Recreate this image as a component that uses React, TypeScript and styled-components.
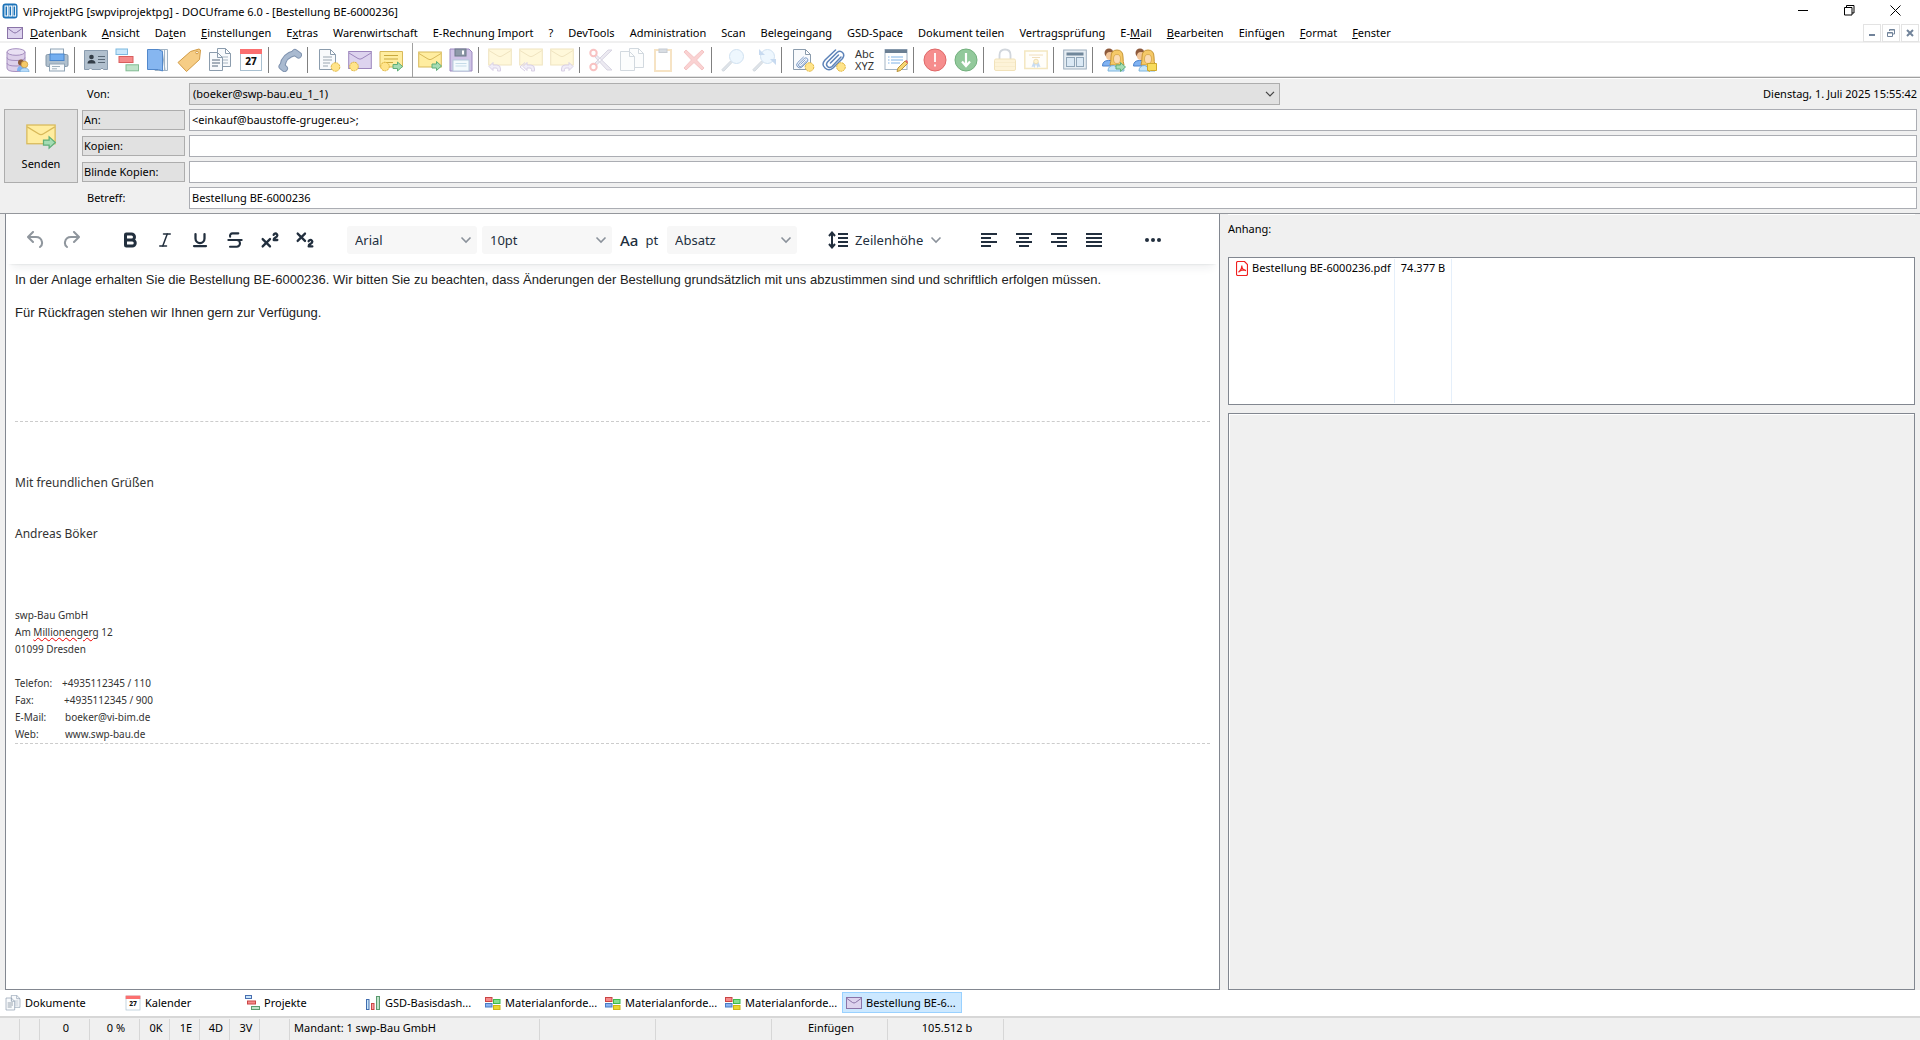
import React from 'react';
import styled, { createGlobalStyle } from 'styled-components';
import { Bold, Italic, Underline, Strikethrough, Superscript, Subscript } from 'lucide-react';

const UI_FONT = '"Noto Sans", "Open Sans", sans-serif';

const GlobalStyle = createGlobalStyle`
  *, *::before, *::after { box-sizing: border-box; }
  body { margin: 0; background: #f0f0f0; }
  button, input, select { font: inherit; color: inherit; margin: 0; }
`;

/* ---------- window frame ---------- */

const Window = styled.div`
  min-height: 100vh;
  display: flex;
  flex-direction: column;
  background: #f0f0f0;
  color: #000;
  font: 11px/16px ${UI_FONT};
`;

const TitleBar = styled.header`
  height: 24px;
  padding: 0 2px 4px;
  display: flex;
  align-items: center;
  background: #fff;
`;

const Title = styled.h1`
  margin: 4px 0 0 5px;
  flex: 1;
  font-size: 11px;
  line-height: 16px;
  font-weight: 400;
  white-space: nowrap;
`;

const AppLogo = styled.span`
  display: flex;
  margin-top: 2px;
`;

const CaptionButton = styled.button`
  width: 46px;
  height: 20px;
  padding: 0;
  border: 0;
  background: none;
  display: grid;
  place-items: center;
`;

const MenuBar = styled.nav`
  height: 19px;
  padding-left: 7px;
  display: flex;
  align-items: center;
  background: #fff;
  border-bottom: 2px solid #f0f0f0;
`;

const MenuItems = styled.div`
  flex: 1;
  display: flex;
  gap: 1px;
`;

const MenuItem = styled.button`
  padding: 0 7px;
  border: 0;
  background: none;
  line-height: 16px;
  white-space: nowrap;
`;

const MdiButtons = styled.div`
  display: flex;
  gap: 1px;
  padding-right: 1px;
`;

const MdiButton = styled.button`
  width: 18px;
  height: 18px;
  padding: 0;
  border: 1px solid #e3e3e3;
  background: #fff;
  display: grid;
  place-items: center;
`;

const ToolBar = styled.div`
  height: 36px;
  padding-left: 2px;
  display: flex;
  align-items: stretch;
  background: #fff;
  border-bottom: 1px solid #fff;
  box-shadow: inset 0 -1px #a0a0a0, inset 0 -2px #e3e3e3;
`;

const ToolButton = styled.button<{ $dim?: boolean }>`
  width: 31px;
  height: 34px;
  padding: 0;
  border: 0;
  background: none;
  display: grid;
  place-items: center;
  opacity: ${p => (p.$dim ? 0.38 : 1)};
`;

const ToolSeparator = styled.span<{ $tall?: boolean }>`
  width: 8px;
  display: flex;
  padding: ${p => (p.$tall ? '0 0 1px 6px' : '4px 0 5px 2px')};
  &::before {
    content: '';
    width: 1px;
    background: ${p => (p.$tall ? '#a0a0a0' : '#808080')};
  }
`;

const SpellLabel = styled.span`
  font-size: 11px;
  line-height: 12px;
  color: #333;
`;

/* ---------- mail header ---------- */

const MailHeader = styled.form`
  display: grid;
  grid-template-columns: 74px 103px minmax(0, 1fr);
  grid-auto-rows: 22px;
  gap: 4px;
  padding: 4px 3px 4px 4px;
  border-bottom: 1px solid #94979c;
`;

const SendButton = styled.button`
  grid-column: 1;
  grid-row: 2 / 5;
  border: 1px solid #adadad;
  background: #e1e1e1;
  display: flex;
  flex-direction: column;
  align-items: center;
  justify-content: center;
  gap: 6px;
`;

const FieldLabel = styled.label`
  grid-column: 2;
  padding-left: 5px;
  line-height: 22px;
`;

const FieldButton = styled.button`
  grid-column: 2;
  height: 20px;
  align-self: center;
  padding: 0 1px;
  border: 1px solid #adadad;
  background: #e1e1e1;
  text-align: left;
`;

const FieldInput = styled.input`
  grid-column: 3;
  min-width: 0;
  padding: 0 2px;
  border: 1px solid #abadb3;
  background: #fff;
`;

const SenderRow = styled.div`
  grid-column: 3;
  display: flex;
  justify-content: space-between;
  align-items: center;
  gap: 16px;
  white-space: nowrap;
`;

const Picker = styled.span<{ $width: number }>`
  width: ${p => p.$width}px;
  display: grid;
  align-items: center;
  > * { grid-area: 1 / 1; }
  > svg { justify-self: end; margin-right: 5px; pointer-events: none; }
`;

const SenderSelect = styled.select`
  appearance: none;
  width: 100%;
  height: 22px;
  padding: 0 3px;
  border: 1px solid #adadad;
  border-radius: 0;
  background: #e1e1e1;
`;

/* ---------- editor ---------- */

const Workspace = styled.main`
  flex: 1;
  display: grid;
  grid-template-columns: minmax(0, 1215fr) minmax(0, 687fr);
  gap: 8px;
  padding-left: 5px;
  padding-right: 5px;
`;

const Editor = styled.section`
  display: flex;
  flex-direction: column;
  background: #fff;
  border: 1px solid #828790;
  border-top: 0;
`;

const EditorBar = styled.div`
  display: flex;
  align-items: center;
  height: 50px;
  margin: 0 2px;
  padding: 2px 10px 0;
  color: #222f3e;
  font-size: 13px;
  box-shadow: 0 2px 2px -2px rgba(34, 47, 62, 0.15), 0 8px 8px -4px rgba(34, 47, 62, 0.07);
`;

const BarGroup = styled.div<{ $left?: number }>`
  display: flex;
  align-items: center;
  margin-left: ${p => p.$left ?? 0}px;
`;

const BarButton = styled.button<{ $muted?: boolean; $wide?: boolean }>`
  width: ${p => (p.$wide ? 'auto' : '35px')};
  height: 28px;
  padding: 0;
  border: 0;
  background: none;
  display: flex;
  align-items: center;
  justify-content: center;
  gap: 7px;
  opacity: ${p => (p.$muted ? 0.5 : 1)};
`;

const CaseMark = styled.span`
  font-size: 15px;
  font-weight: 500;
`;

const BarSelect = styled.select`
  appearance: none;
  width: 100%;
  height: 28px;
  padding: 0 8px;
  border: 0;
  border-radius: 3px;
  background: #f7f7f7;
`;

const Message = styled.div`
  flex: 1;
  padding: 7px 9px;
  color: #222;
  font: 13px/17px "Liberation Sans", Arial, sans-serif;
`;

const Paragraph = styled.p`
  margin: 0 0 16px;
`;

const Signature = styled.div`
  margin-top: 100px;
  padding-top: 52px;
  border: dashed #ccc;
  border-width: 1px 0;
  color: #333;
  font: 11px/17px ${UI_FONT};
`;

const Greeting = styled.p<{ $below: number }>`
  margin: 0 0 ${p => p.$below}px;
  font-size: 12px;
`;

const Address = styled.div`
  font-size: 10px;
`;

const Misspelled = styled.span`
  text-decoration: underline wavy #e00 1px;
`;

const Contact = styled.div`
  display: flex;
`;

const ContactKey = styled.span<{ $width: number }>`
  width: ${p => p.$width}px;
`;

/* ---------- attachments ---------- */

const SidePanel = styled.aside`
  display: flex;
  flex-direction: column;
  border-top: 1px solid #fff;
`;

const SideTitle = styled.h2`
  margin: 6px 0 20px;
  font-size: 11px;
  line-height: 16px;
  font-weight: 400;
`;

const FileBox = styled.div`
  height: 148px;
  padding: 1px;
  border: 1px solid #828790;
  background: #fff;
`;

const FileTable = styled.table`
  height: 100%;
  border-collapse: collapse;
  tr:first-child { height: 18px; }
  td {
    padding: 0 3px 0 6px;
    border-right: 1px solid #e5effa;
    white-space: nowrap;
  }
  td + td { padding-right: 6px; }
`;

const FileName = styled.a`
  display: flex;
  align-items: center;
  gap: 4px;
  color: inherit;
  text-decoration: none;
`;

const Preview = styled.div`
  flex: 1;
  margin-top: 8px;
  border: 1px solid #828790;
  box-shadow: inset 1px 1px #fff;
`;

/* ---------- bottom bars ---------- */

const DocTabs = styled.div`
  display: flex;
  height: 26px;
  padding: 2px 2px 3px;
  background: #fff;
`;

const DocTab = styled.button<{ $active?: boolean }>`
  width: 120px;
  padding: 0 ${p => (p.$active ? 3 : 2)}px;
  display: flex;
  align-items: center;
  gap: 4px;
  border: 1px solid ${p => (p.$active ? '#99d1ff' : 'transparent')};
  background: ${p => (p.$active ? '#cce8ff' : 'none')};
  white-space: nowrap;
`;

const StatusBar = styled.footer`
  display: flex;
  height: 24px;
  padding-top: 1px;
  border-top: 2px solid #d7d7d7;
`;

const StatusCell = styled.span<{ $width: number; $left?: boolean }>`
  width: ${p => p.$width}px;
  padding: ${p => (p.$left ? '0 4px' : '0 0 0 3px')};
  border-right: 1px solid #d7d7d7;
  text-align: ${p => (p.$left ? 'left' : 'center')};
  line-height: 18px;
`;

/* ---------- icons ---------- */

const Svg = ({ size = 24, box = 24, children }: { size?: number; box?: number; children: React.ReactNode }) => (
  <svg width={size} height={size} viewBox={`0 0 ${box} ${box}`} fill="none" aria-hidden="true">{children}</svg>
);

const Seal = ({ x, y }: { x: number; y: number }) => (
  <circle cx={x} cy={y} r="4.3" fill="#ffe48a" stroke="#e0b53c" strokeDasharray="2 .6" />
);
const GreenArrow = ({ x, y }: { x: number; y: number }) => (
  <path transform={`translate(${x} ${y})`} d="M0 2.500h4.500V0L9.500 4.500 4.500 9V6.500H0z" fill="#a5dcb4" stroke="#5fae78" />
);
const Envelope = ({ fill, line, y = 1.5, h = 17 }: { fill: string; line: string; y?: number; h?: number }) => (
  <g stroke={line} fill={fill} transform={`translate(0 ${y})`}>
    <rect x=".7" y=".5" width="22.6" height={h} />
    <path d="M1 2l9 5.500q2 1.300 4 0L23 2" />
  </g>
);
const YELLOW = { fill: '#ffeda0', line: '#d8b95a' };
const PURPLE = { fill: '#ddd3ee', line: '#9d86bd' };
const Page = ({ x = 3, y = 1, w = 16, h = 21 }: { x?: number; y?: number; w?: number; h?: number }) => (
  <path d={`M${x + .5} ${y + .5}h${w - 6}l5 5v${h - 6}h-${w - 1}zM${x + w - 5.5} ${y + .5}v5h5`} fill="#f8fafc" stroke="#8b9cad" />
);
const Curl = ({ x, flip }: { x: number; flip?: boolean }) => (
  <path transform={`translate(${x} 14.500)${flip ? ' scale(-1 1)' : ''}`} d="M0 4L4 0v2.500h4q3.500 0 3.500 4V8.500h-3V7q0-1.500-1.500-1.500H4V8z" fill="#ddd3ee" stroke="#9d86bd" />
);
const People = ({ badge }: { badge: React.ReactNode }) => (
  <Svg>
    <circle cx="7" cy="5" r="4.500" fill="#8d5a3c" />
    <circle cx="8" cy="8" r="4" fill="#f3c79a" />
    <path d="M.500 18q0-5.500 6-5.500h4V18z" fill="#7fb2f2" stroke="#4a82cc" />
    <path d="M8 17q1-3 1-8 0-7 6-7t6 7q0 5 1 8z" fill="#f5c967" stroke="#c79536" />
    <ellipse cx="15" cy="11" rx="3.500" ry="4.500" fill="#fbdcb4" stroke="#c79536" strokeWidth=".6" />
    <path d="M6 23q0-5.500 6-5.500l3 2 3-2q4 0 4 5.500z" fill="#c5e5fb" stroke="#7db4dd" />
    {badge}
  </Svg>
);

const AppIcon = () => (
  <Svg size={16} box={16}>
    <rect x=".5" y=".5" width="15" height="15" rx="3" fill="#1c73b9" />
    <rect x="3" y="3" width="2.600" height="10" fill="#1c73b9" stroke="#fff" />
    <rect x="7" y="3" width="2.600" height="10" fill="#1c73b9" stroke="#fff" />
    <rect x="11" y="3" width="2.600" height="10" fill="#1c73b9" stroke="#fff" />
  </Svg>
);
const MiniMail = () => (
  <svg width="16" height="12" viewBox="0 0 16 12" fill="#ddd3ee" stroke="#8a74a8" aria-hidden="true">
    <rect x=".5" y=".5" width="15" height="11" />
    <path d="M1 1.500l5.500 4q1.500 1 3 0l5.500-4" />
  </svg>
);
const DatabaseIcon = () => (
  <Svg>
    <path d="M1 4v16q0 3.500 9 3.500T19 20V4z" fill="#ddd0ea" stroke="#a58ebf" />
    <ellipse cx="10" cy="4" rx="9" ry="3.300" fill="#e9e0f3" stroke="#a58ebf" />
    <path d="M1 9.500q0 3 9 3t9-3M1 15q0 3 9 3t9-3" stroke="#a58ebf" />
    <circle cx="15" cy="14.500" r="3" fill="#8d5a3c" />
    <path d="M11 23q0-5 4-5h2v5z" fill="#7fb2f2" />
    <circle cx="18.500" cy="16.500" r="3.300" fill="#f5c967" stroke="#c79536" strokeWidth=".7" />
    <path d="M14 24q0-4 4.500-4t4.500 4z" fill="#b7dcfa" stroke="#6aa3d6" strokeWidth=".7" />
  </Svg>
);
const PrinterIcon = () => (
  <Svg>
    <rect x="5.500" y="1" width="13" height="7" fill="#f4f8fb" stroke="#90a4b5" />
    <rect x="1" y="6.500" width="22" height="12" rx="1.500" fill="#afbfcd" stroke="#8497a8" />
    <rect x="5" y="6" width="14" height="6.500" fill="#72aef0" stroke="#4a86cc" />
    <rect x="4.500" y="16" width="15" height="7" fill="#f8fafc" stroke="#90a4b5" />
    <path d="M7 18.500h8M7 20.800h5" stroke="#9fb0bd" />
  </Svg>
);
const CardIcon = () => (
  <Svg>
    <path d="M.500 2.500h23v19h-4l-1.500-1.500-1.500 1.500H8L6.500 20 5 21.500H.500z" fill="#b1c0ce" stroke="#8a9cae" />
    <circle cx="7.500" cy="9" r="2.300" fill="#333d47" />
    <path d="M3.500 15.500q0-3.500 4-3.500t4 3.500z" fill="#333d47" />
    <path d="M14 8.500h7M14 11.500h7M14 14.500h7" stroke="#5a6977" />
  </Svg>
);
const ProjectIcon = () => (
  <Svg>
    <rect x="1" y="1" width="11.500" height="5.500" fill="#c9e7fb" stroke="#7fb9e0" />
    <rect x="4" y="8.500" width="14" height="6" fill="#f58a8a" stroke="#d95e5e" />
    <rect x="11" y="16.800" width="12.500" height="6" fill="#bfe3c9" stroke="#82bd93" />
  </Svg>
);
const BookIcon = () => (
  <Svg>
    <path d="M9 1.500h12.500v21H9z" fill="#f6f9fc" stroke="#9fb2c4" />
    <path d="M16 2l3 20M18.500 2v20" stroke="#9fb2c4" />
    <path d="M1.500 1.500h11l4 2v19.500l-4-1.500h-11z" fill="#86b6f0" stroke="#5288cb" />
  </Svg>
);
const TagIcon = () => (
  <Svg>
    <path d="M13.500 3.500L22 1l1.500 1-1 9.500L9.500 23.500 1 14.500z" fill="#f6cd85" stroke="#d09a45" strokeLinejoin="round" />
    <circle cx="20" cy="4.500" r="1.300" fill="#fff" stroke="#d09a45" />
  </Svg>
);
const DocsIcon = ({ size = 24 }: { size?: number }) => (
  <Svg size={size}>
    <Page x={9} y={0} w={14} h={19} />
    <path d="M13 9h7M13 12h7M13 15h7" stroke="#a9b6c2" />
    <Page x={1} y={4} w={14} h={19} />
    <path d="M4 12h8M4 15h8M4 18h6" stroke="#8b98a5" strokeWidth="1.300" />
  </Svg>
);
const CalendarIcon = ({ size = 24 }: { size?: number }) => (
  <Svg size={size}>
    <rect x="1.500" y="1.500" width="21" height="21" fill="#fff" stroke="#a9c0d0" />
    <rect x="1" y="1" width="22" height="5" fill="#fb6f6f" />
    <text x="12" y="16.500" textAnchor="middle" fontFamily={UI_FONT} fontSize="10" fontWeight="800" fill="#111">27</text>
  </Svg>
);
const PhoneIcon = () => (
  <Svg>
    <g strokeLinecap="round" strokeLinejoin="round" stroke="#8094b0">
      <path d="M4.500 17.500Q6 7.500 17 5" strokeWidth="6" />
      <path d="M4 18.500l2.500 2M17 4.500l3.500 2.500" strokeWidth="7" />
    </g>
    <g strokeLinecap="round" strokeLinejoin="round" stroke="#a9bad0">
      <path d="M4.500 17.500Q6 7.500 17 5" strokeWidth="4" />
      <path d="M4 18.500l2.500 2M17 4.500l3.500 2.500" strokeWidth="5" />
    </g>
  </Svg>
);
const NewDocIcon = () => (
  <Svg><Page x={2} w={17} /><path d="M6 9h9M6 12h9M6 15h7M6 18h5" stroke="#9aa6b1" /><Seal x={18.500} y={19} /></Svg>
);
const NewMailIcon = () => <Svg><Envelope {...PURPLE} y={3} h={17} /><Seal x={6} y={18.500} /></Svg>;
const NewNoteIcon = () => (
  <Svg>
    <path d="M1 3.500h22.500v15.500H1z" fill="#ffeda0" stroke="#d8b95a" />
    <path d="M5 7.500h14M5 11h14M5 14.500h9" stroke="#c9a93f" />
    <Seal x={6} y={18.500} /><GreenArrow x={14} y={14} />
  </Svg>
);
const SendMailIcon = ({ size = 24 }: { size?: number }) => (
  <Svg size={size}><Envelope {...YELLOW} y={3.5} h={15} /><GreenArrow x={14} y={13.5} /></Svg>
);
const SaveIcon = () => (
  <Svg>
    <path d="M1 1h19l3 3v19H1z" fill="#cfc3e6" stroke="#9d8ac0" />
    <rect x="6" y="1" width="11" height="7" fill="#8d99a8" stroke="#6f7b8a" /><rect x="13" y="2.500" width="2" height="4" fill="#fff" />
    <rect x="4" y="12" width="16" height="11" fill="#f4fafd" stroke="#b6cbdc" />
    <path d="M6.500 15.500h11M6.500 18h11" stroke="#c5dbe8" />
  </Svg>
);
const ReplyIcon = () => <Svg><Envelope {...YELLOW} y={.5} h={16} /><Curl x={1} /></Svg>;
const ReplyAllIcon = () => <Svg><Envelope {...YELLOW} y={.5} h={16} /><path d="M6 14.500l-5 4.500 5 4" stroke="#9d86bd" /><Curl x={4} /></Svg>;
const ForwardIcon = () => <Svg><Envelope {...YELLOW} y={.5} h={16} /><Curl x={23} flip /></Svg>;
const CutIcon = () => (
  <Svg>
    <path d="M7 6.500L23 22h-5L6 9zM7 17.500L23 2h-4L6 15z" fill="#cfc9dd" stroke="#9a92b5" />
    <circle cx="4.500" cy="5" r="3.200" stroke="#ee6060" strokeWidth="2" /><circle cx="4.500" cy="19" r="3.200" stroke="#ee6060" strokeWidth="2" />
  </Svg>
);
const CopyIcon = () => <Svg><Page x={9} y={0} w={15} h={20} /><Page x={0} y={3} w={15} h={20} /></Svg>;
const PasteIcon = () => (
  <Svg>
    <rect x="4" y="2" width="16" height="21" fill="#fff" stroke="#eab765" strokeWidth="2" />
    <rect x="8" y="1" width="8" height="3.500" fill="#9aa7b8" stroke="#6d7b8d" />
  </Svg>
);
const DeleteIcon = () => <Svg><path d="M4 2l8 7.500L20 2l2 2-7.500 8 7.500 8-2 2-8-7.500L4 22l-2-2 7.500-8L2 4z" fill="#f28a8a" stroke="#e46868" /></Svg>;
const SearchIcon = ({ again }: { again?: boolean }) => (
  <Svg>
    <path d="M11 14.500L3 23q-2 .500-2-1.500L9.500 13z" fill="#a9b8c6" stroke="#8d9dad" />
    <circle cx="15.500" cy="8.500" r="7" fill="#d4ebfd" stroke="#85b2da" />
    {again && <path d="M7 1v6h6zM24 17v-6h-6z" fill="#6e9fd8" />}
  </Svg>
);
const Clip = ({ t }: { t?: string }) => (
  <path transform={t} d="M19 9l-9 9.500q-2.500 2-4.500 0t0-4.500L15 4.500q3-2.500 5.500 0t0 6L11 20q-4 3.500-8 0t0-8L13.500 2M16.500 7l-8 8" stroke="#5d83b8" strokeWidth="1.500" strokeLinecap="round" />
);
const AttachDocIcon = () => <Svg><Page x={2} w={18} /><Clip t="translate(5 8) scale(.55)" /><Seal x={18.500} y={19} /></Svg>;
const AttachIcon = () => <Svg><Clip /><Seal x={19} y={19} /></Svg>;
const EditFormIcon = () => (
  <Svg>
    <rect x="1" y="1.500" width="22" height="20" fill="#fff" stroke="#a3b4c4" /><rect x="1" y="1.500" width="22" height="3.500" fill="#6b7f93" />
    <path d="M4 9h1.500M4 12h1.500M4 15h1.500M7 9h12M7 12h12M7 15h9" stroke="#7fb2e6" />
    <path d="M14 20l7-7 2.500 2.500-7 7-3.500 1z" fill="#f7d774" stroke="#b9923a" /><path d="M21 13l1.300-1.300 2 2.300-1 1.500z" fill="#e46868" />
  </Svg>
);
const AlertIcon = () => (
  <Svg><circle cx="12" cy="12" r="11" fill="#f68d8d" stroke="#e06868" /><path d="M12 5v9M12 16.500v2" stroke="#fff" strokeWidth="1.800" /></Svg>
);
const DownIcon = () => (
  <Svg><circle cx="12" cy="12" r="11" fill="#92c99b" stroke="#72b07d" /><path d="M12 5v12M8 13.500l4 4.500 4-4.500" stroke="#fff" strokeWidth="2.200" /></Svg>
);
const LockIcon = () => (
  <Svg>
    <path d="M6.500 11V7q0-5.500 5.500-5.500T17.500 7v4" stroke="#8794a5" strokeWidth="1.800" />
    <rect x="1.500" y="11" width="21" height="11.500" rx="1.500" fill="#fbe29a" stroke="#ddb44c" /><path d="M2 14.500h20M2 18.500h20" stroke="#efcf7a" />
  </Svg>
);
const CertIcon = () => (
  <Svg>
    <rect x=".800" y="3" width="22.400" height="17.500" fill="#fffdf3" stroke="#e3c15d" strokeWidth="1.500" /><path d="M5 7h14M8 9.500h8" stroke="#dcae55" />
    <path d="M9.500 14l-2 5 2-.500 1 1.500 1.500-4 1.500 4 1-1.500 2 .500-2-5z" fill="#6fa5dd" /><circle cx="12" cy="13.500" r="2.300" fill="#ffe48a" stroke="#d5a93b" />
  </Svg>
);
const LayoutIcon = () => (
  <Svg>
    <rect x=".700" y="2" width="22.600" height="19" fill="#e6edf3" stroke="#9cadbd" />
    <rect x="3.500" y="4.500" width="17" height="3" fill="#70879b" />
    <rect x="3.500" y="9.500" width="8" height="9" fill="#dbe9f5" stroke="#8fa5b8" /><rect x="13.500" y="9.500" width="7" height="9" fill="#dbe9f5" stroke="#8fa5b8" />
  </Svg>
);
const Chevron = () => <svg width="10" height="6" viewBox="0 0 10 6" fill="none" stroke="#444" strokeWidth="1.200" aria-hidden="true"><path d="M1 .8l4 4 4-4" /></svg>;
const BarChevron = () => <svg width="12" height="8" viewBox="0 0 12 8" fill="none" stroke="#8b929b" strokeWidth="1.600" aria-hidden="true"><path d="M1.500 1.500l4.500 4.500 4.500-4.500" /></svg>;
const UndoIcon = () => <Svg><path d="M9 4L4 9l5 5M4.500 9H12q5 0 6 5 .500 3.500-2 5" stroke="#222f3e" strokeWidth="2" strokeLinecap="round" strokeLinejoin="round" /></Svg>;
const RedoIcon = () => <Svg><path d="M15 4l5 5-5 5M19.500 9H12q-5 0-6 5-.500 3.500 2 5" stroke="#222f3e" strokeWidth="2" strokeLinecap="round" strokeLinejoin="round" /></Svg>;
const LineHeightIcon = () => (
  <svg width="20" height="18" viewBox="0 0 20 18" fill="none" stroke="#222f3e" strokeWidth="2" aria-hidden="true">
    <path d="M4 2v14M1 5l3-3.500L7 5M1 13l3 3.500L7 13M10 3h10M10 7h10M10 11h10M10 15h10" />
  </svg>
);
const AlignIcon = ({ spans }: { spans: [number, number][] }) => (
  <svg width="16" height="16" viewBox="0 0 16 16" stroke="#222f3e" strokeWidth="2" aria-hidden="true">
    {spans.map(([a, b], i) => <path key={i} d={`M${a} ${2 + i * 4}H${b}`} />)}
  </svg>
);
const DotsIcon = () => <svg width="18" height="6" viewBox="0 0 18 6" fill="#222f3e" aria-hidden="true"><circle cx="3" cy="3" r="2" /><circle cx="9" cy="3" r="2" /><circle cx="15" cy="3" r="2" /></svg>;
const PdfIcon = () => (
  <svg width="12" height="15" viewBox="0 0 12 15" fill="none" stroke="#f02020" aria-hidden="true">
    <path d="M2 .5h6.500l3 3V13q0 1.500-1.500 1.500H2Q.5 14.500.5 13V2Q.5.5 2 .5z" fill="#fff" strokeWidth="1.200" />
    <path d="M2.500 11.200Q6 8.500 5.800 4.500M5.800 4.500Q5.500 8.500 10 9.700M3 10.500Q6 8.700 9.500 9" strokeWidth="1.200" />
  </svg>
);
const MiniProject = () => (
  <Svg size={15} box={15}>
    <rect x=".5" y=".5" width="6" height="3" fill="#c9e7fb" stroke="#4a6fb0" /><rect x="2.500" y="6" width="8" height="3" fill="#f58a8a" stroke="#c94545" /><rect x="6.500" y="11.500" width="8" height="3" fill="#bfe3c9" stroke="#5b9a6f" />
  </Svg>
);
const MiniChart = () => (
  <Svg size={16} box={16}>
    <rect x="1.500" y="4.500" width="2.500" height="10" fill="#c9e7fb" stroke="#3f6cae" /><rect x="6.500" y="8.500" width="2.500" height="6" fill="#f9a0a0" stroke="#c94545" /><rect x="11.500" y="1.500" width="3" height="13" fill="#bfe3c9" stroke="#5b9a6f" />
  </Svg>
);
const MiniTiles = () => (
  <Svg size={16} box={16}>
    <rect x=".5" y="2.500" width="6.500" height="4" fill="#f58a8a" stroke="#c94545" /><rect x="8.500" y="4.500" width="6.500" height="4" fill="#86e08e" stroke="#3fba4b" />
    <rect x=".5" y="8.500" width="6.500" height="3.500" fill="#8ab4f0" stroke="#4a7cc4" /><rect x="8.500" y="10.500" width="6.500" height="4" fill="#ecd52f" stroke="#d0b514" />
  </Svg>
);

/* ---------- data ---------- */

// An ampersand marks the access key of a menu entry.
const menus = [
  '&Datenbank', '&Ansicht', 'Da&ten', '&Einstellungen', 'E&xtras', 'Warenwirtschaft', 'E-Rechnung Import', '?',
  'DevTools', 'Administration', 'Scan', 'Belegeingang', 'GSD-Space', 'Dokument teilen', 'Vertragsprüfung',
  'E-&Mail', '&Bearbeiten', 'Einfü&gen', '&Format', '&Fenster',
];

type Tool = { name: string; icon: React.ReactNode; dim?: boolean };
const toolGroups: Tool[][] = [
  [{ name: 'Datenbank', icon: <DatabaseIcon /> }],
  [{ name: 'Drucken', icon: <PrinterIcon /> }],
  [
    { name: 'Adressen', icon: <CardIcon /> }, { name: 'Projekte', icon: <ProjectIcon /> }, { name: 'Katalog', icon: <BookIcon /> },
    { name: 'Artikel', icon: <TagIcon /> }, { name: 'Dokumente', icon: <DocsIcon /> }, { name: 'Kalender', icon: <CalendarIcon /> },
  ],
  [{ name: 'Telefon', icon: <PhoneIcon /> }],
  [{ name: 'Neues Dokument', icon: <NewDocIcon /> }, { name: 'Neue E-Mail', icon: <NewMailIcon /> }, { name: 'Neue Notiz', icon: <NewNoteIcon /> }],
  [{ name: 'Senden', icon: <SendMailIcon /> }, { name: 'Speichern', icon: <SaveIcon /> }],
  [{ name: 'Antworten', icon: <ReplyIcon />, dim: true }, { name: 'Allen antworten', icon: <ReplyAllIcon />, dim: true }, { name: 'Weiterleiten', icon: <ForwardIcon />, dim: true }],
  [
    { name: 'Ausschneiden', icon: <CutIcon />, dim: true }, { name: 'Kopieren', icon: <CopyIcon />, dim: true },
    { name: 'Einfügen', icon: <PasteIcon />, dim: true }, { name: 'Löschen', icon: <DeleteIcon />, dim: true },
  ],
  [{ name: 'Suchen', icon: <SearchIcon />, dim: true }, { name: 'Weitersuchen', icon: <SearchIcon again />, dim: true }],
  [
    { name: 'Dokument anhängen', icon: <AttachDocIcon /> }, { name: 'Datei anhängen', icon: <AttachIcon /> },
    { name: 'Rechtschreibung', icon: <SpellLabel>Abc<br />XYZ</SpellLabel> }, { name: 'Formular', icon: <EditFormIcon /> },
  ],
  [{ name: 'Hohe Priorität', icon: <AlertIcon /> }, { name: 'Niedrige Priorität', icon: <DownIcon /> }],
  [{ name: 'Verschlüsseln', icon: <LockIcon />, dim: true }, { name: 'Signieren', icon: <CertIcon />, dim: true }],
  [{ name: 'Layout', icon: <LayoutIcon /> }],
  [
    { name: 'Kontakt senden', icon: <People badge={<GreenArrow x={14} y={14.5} />} /> },
    { name: 'Kontakt notieren', icon: <People badge={<path d="M14.500 15.500h9v7h-6l-1.500 1v-1h-1.500z" fill="#f8dc5c" stroke="#cfa92c" />} /> },
  ],
];

const formats = [
  { name: 'Fett', Icon: Bold, size: 18, weight: 4 },
  { name: 'Kursiv', Icon: Italic, size: 18, weight: 2 },
  { name: 'Unterstrichen', Icon: Underline, size: 18, weight: 3 },
  { name: 'Durchgestrichen', Icon: Strikethrough, size: 20, weight: 2.5 },
  { name: 'Hochgestellt', Icon: Superscript, size: 22, weight: 2.5 },
  { name: 'Tiefgestellt', Icon: Subscript, size: 22, weight: 2.5 },
];

const alignments: { name: string; spans: [number, number][] }[] = [
  { name: 'Linksbündig', spans: [[0, 16], [0, 10], [0, 16], [0, 10]] },
  { name: 'Zentriert', spans: [[0, 16], [3, 13], [0, 16], [3, 13]] },
  { name: 'Rechtsbündig', spans: [[0, 16], [6, 16], [0, 16], [6, 16]] },
  { name: 'Blocksatz', spans: [[0, 16], [0, 16], [0, 16], [0, 16]] },
];

const contacts = [
  { key: 'Telefon:', value: '+4935112345 / 110', width: 47 },
  { key: 'Fax:', value: '+4935112345 / 900', width: 49 },
  { key: 'E-Mail:', value: 'boeker@vi-bim.de', width: 50 },
  { key: 'Web:', value: 'www.swp-bau.de', width: 50 },
];

const tabs = [
  { label: 'Dokumente', icon: <DocsIcon size={16} /> },
  { label: 'Kalender', icon: <CalendarIcon size={16} /> },
  { label: 'Projekte', icon: <MiniProject /> },
  { label: 'GSD-Basisdash...', icon: <MiniChart /> },
  { label: 'Materialanforde...', icon: <MiniTiles /> },
  { label: 'Materialanforde...', icon: <MiniTiles /> },
  { label: 'Materialanforde...', icon: <MiniTiles /> },
  { label: 'Bestellung BE-6...', icon: <MiniMail />, active: true },
];

const statusCells = [
  { width: 20, text: '' }, { width: 20, text: '' }, { width: 50, text: '0' }, { width: 50, text: '0 %' },
  { width: 30, text: '0K' }, { width: 30, text: '1E' }, { width: 30, text: '4D' }, { width: 30, text: '3V' },
  { width: 30, text: '' }, { width: 250, text: 'Mandant: 1 swp-Bau GmbH', left: true }, { width: 116, text: '' },
  { width: 116, text: '' }, { width: 116, text: 'Einfügen' }, { width: 116, text: '105.512 b' },
];

const MenuText = ({ text }: { text: string }) => {
  const [before, after] = text.split('&');
  return after === undefined ? <>{before}</> : <>{before}<u>{after[0]}</u>{after.slice(1)}</>;
};

export default function App() {
  return (
    <Window>
      <GlobalStyle />
      <TitleBar>
        <AppLogo><AppIcon /></AppLogo>
        <Title>ViProjektPG [swpviprojektpg] - DOCUframe 6.0 - [Bestellung BE-6000236]</Title>
        <CaptionButton aria-label="Minimieren"><svg width="10" height="10" stroke="#000"><path d="M0 5.500h10" /></svg></CaptionButton>
        <CaptionButton aria-label="Wiederherstellen"><svg width="11" height="11" fill="none" stroke="#000"><path d="M.5 2.500h7.500v7.500H.5zM2.500 2.500V.5h7.500V8H8" /></svg></CaptionButton>
        <CaptionButton aria-label="Schließen"><svg width="11" height="11" stroke="#000"><path d="M.5.5l10 10M10.500.5l-10 10" /></svg></CaptionButton>
      </TitleBar>
      <MenuBar>
        <MiniMail />
        <MenuItems>
          {menus.map(m => <MenuItem key={m}><MenuText text={m} /></MenuItem>)}
        </MenuItems>
        <MdiButtons>
          <MdiButton aria-label="Dokument minimieren"><svg width="8" height="8"><path d="M1 5h6v2H1z" fill="#71839a" /></svg></MdiButton>
          <MdiButton aria-label="Dokument wiederherstellen"><svg width="8" height="8" fill="none" stroke="#71839a"><path d="M.5 3.500h5v4h-5zM.5 4h5M2.500 2V.5h5v4.500H6M2.500 1h5" /></svg></MdiButton>
          <MdiButton aria-label="Dokument schließen"><svg width="8" height="8" stroke="#71839a" strokeWidth="2"><path d="M1 1l6 6M7 1L1 7" /></svg></MdiButton>
        </MdiButtons>
      </MenuBar>
      <ToolBar role="toolbar">
        {toolGroups.map((group, i) => (
          <React.Fragment key={i}>
            {i > 0 && <ToolSeparator $tall={i === 5} />}
            {group.map(t => <ToolButton key={t.name} aria-label={t.name} $dim={t.dim}>{t.icon}</ToolButton>)}
          </React.Fragment>
        ))}
      </ToolBar>

      <MailHeader onSubmit={e => e.preventDefault()}>
        <FieldLabel htmlFor="from">Von:</FieldLabel>
        <SenderRow>
          <Picker $width={1091}>
            <SenderSelect id="from"><option>(boeker@swp-bau.eu_1_1)</option></SenderSelect>
            <Chevron />
          </Picker>
          <time dateTime="2025-07-01T15:55:42">Dienstag, 1. Juli 2025 15:55:42</time>
        </SenderRow>
        <SendButton type="submit"><SendMailIcon size={30} />Senden</SendButton>
        <FieldButton type="button" id="to-label">An:</FieldButton>
        <FieldInput aria-labelledby="to-label" defaultValue="<einkauf@baustoffe-gruger.eu>;" />
        <FieldButton type="button" id="cc-label">Kopien:</FieldButton>
        <FieldInput aria-labelledby="cc-label" />
        <FieldButton type="button" id="bcc-label">Blinde Kopien:</FieldButton>
        <FieldInput aria-labelledby="bcc-label" />
        <FieldLabel htmlFor="subject">Betreff:</FieldLabel>
        <FieldInput id="subject" defaultValue="Bestellung BE-6000236" />
      </MailHeader>

      <Workspace>
        <Editor>
          <EditorBar>
            <BarGroup>
              <BarButton $muted aria-label="Rückgängig"><UndoIcon /></BarButton>
              <BarButton $muted aria-label="Wiederholen"><RedoIcon /></BarButton>
            </BarGroup>
            <BarGroup $left={24}>
              {formats.map(({ name, Icon, size, weight }) => (
                <BarButton key={name} aria-label={name}><Icon size={size} strokeWidth={weight} /></BarButton>
              ))}
            </BarGroup>
            <BarGroup $left={25}>
              <Picker $width={130}><BarSelect aria-label="Schriftart"><option>Arial</option></BarSelect><BarChevron /></Picker>
            </BarGroup>
            <BarGroup $left={5}>
              <Picker $width={130}><BarSelect aria-label="Schriftgröße"><option>10pt</option></BarSelect><BarChevron /></Picker>
            </BarGroup>
            <BarGroup $left={8}>
              <BarButton $wide><CaseMark>Aa</CaseMark>pt</BarButton>
            </BarGroup>
            <BarGroup $left={9}>
              <Picker $width={130}><BarSelect aria-label="Absatzformat"><option>Absatz</option></BarSelect><BarChevron /></Picker>
            </BarGroup>
            <BarGroup $left={31}>
              <BarButton $wide><LineHeightIcon />Zeilenhöhe<BarChevron /></BarButton>
            </BarGroup>
            <BarGroup $left={29}>
              {alignments.map(a => <BarButton key={a.name} aria-label={a.name}><AlignIcon spans={a.spans} /></BarButton>)}
            </BarGroup>
            <BarGroup $left={24}>
              <BarButton aria-label="Mehr"><DotsIcon /></BarButton>
            </BarGroup>
          </EditorBar>
          <Message>
            <Paragraph>
              In der Anlage erhalten Sie die Bestellung BE-6000236. Wir bitten Sie zu beachten, dass Änderungen der
              Bestellung grundsätzlich mit uns abzustimmen sind und schriftlich erfolgen müssen.
            </Paragraph>
            <Paragraph>Für Rückfragen stehen wir Ihnen gern zur Verfügung.</Paragraph>
            <Signature>
              <Greeting $below={34}>Mit freundlichen Grüßen</Greeting>
              <Greeting $below={65}>Andreas Böker</Greeting>
              <Address>
                <div>swp-Bau GmbH</div>
                <div>Am <Misspelled>Millionengerg</Misspelled> 12</div>
                <div>01099 Dresden</div>
                <br />
                {contacts.map(c => (
                  <Contact key={c.key}><ContactKey $width={c.width}>{c.key}</ContactKey>{c.value}</Contact>
                ))}
              </Address>
            </Signature>
          </Message>
        </Editor>
        <SidePanel>
          <SideTitle>Anhang:</SideTitle>
          <FileBox>
            <FileTable>
              <tbody>
                <tr>
                  <td><FileName href="#pdf"><PdfIcon />Bestellung BE-6000236.pdf</FileName></td>
                  <td>74.377 B</td>
                </tr>
                <tr><td /><td /></tr>
              </tbody>
            </FileTable>
          </FileBox>
          <Preview />
        </SidePanel>
      </Workspace>

      <DocTabs>
        {tabs.map((t, i) => <DocTab key={i} $active={t.active}>{t.icon}{t.label}</DocTab>)}
      </DocTabs>
      <StatusBar>
        {statusCells.map((c, i) => <StatusCell key={i} $width={c.width} $left={c.left}>{c.text}</StatusCell>)}
      </StatusBar>
    </Window>
  );
}
